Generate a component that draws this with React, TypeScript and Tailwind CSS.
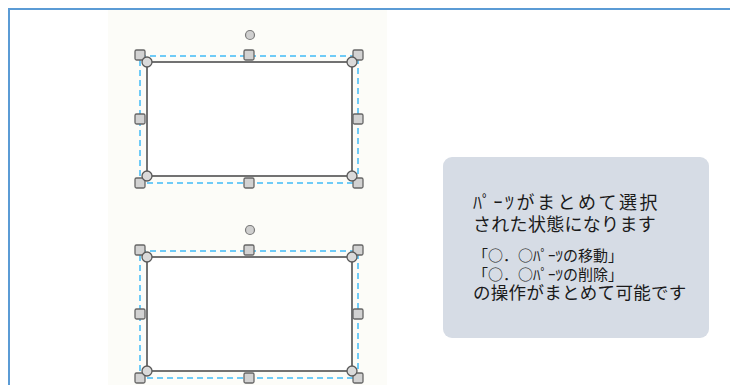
import type { ReactNode } from "react";

const jp = { fontFamily: '"Noto Sans CJK JP", "Noto Sans", sans-serif' };

// one selected shape: rotation knob, dashed selection frame, handles, rect
function SelectedShape() {
  const hx = [32, 141, 250];
  const hy = [45, 109, 173];
  const handles: [number, number][] = [
    [hx[0], hy[0]], [hx[1], hy[0]], [hx[2], hy[0]],
    [hx[0], hy[1]], [hx[2], hy[1]],
    [hx[0], hy[2]], [hx[1], hy[2]], [hx[2], hy[2]],
  ];
  const corners: [number, number][] = [[39, 52], [244, 52], [39, 166], [244, 166]];
  return (
    <svg width="279" height="195" viewBox="0 0 279 195" className="block shrink-0">
      <circle cx="142" cy="25" r="4.5" fill="#cfcfcf" stroke="#7a7a7a" strokeWidth="1.2" />
      <rect x="39" y="52" width="205" height="114" fill="#ffffff" stroke="#727272" strokeWidth="2" />
      <rect x="32" y="46" width="218" height="127" fill="none" stroke="#6fcbf7" strokeWidth="2" strokeDasharray="6 4" />
      {handles.map(([x, y], i) => (
        <rect key={i} x={x - 5} y={y - 5} width="10" height="10" rx="1.5" fill="#d2d2d2" stroke="#666666" strokeWidth="1.3" />
      ))}
      {corners.map(([x, y], i) => (
        <circle key={i} cx={x} cy={y} r="5" fill="#dadada" stroke="#5a5a5a" strokeWidth="1.3" />
      ))}
    </svg>
  );
}

function Line({ children, className }: { children: ReactNode; className: string }) {
  return <div className={"whitespace-nowrap text-[#1a1a1a] " + className}>{children}</div>;
}

export default function App() {
  return (
    <div className="w-[730px] h-[385px] overflow-hidden bg-white pl-2 pt-2">
      <div className="flex h-[400px] border-l-2 border-t-2 border-[#5b9bd5]">
        <div className="w-[98px] shrink-0" />
        <div className="w-[279px] shrink-0 bg-[#fcfcf8] flex flex-col overflow-hidden">
          <SelectedShape />
          <SelectedShape />
        </div>
        <div className="flex-1">
          <div
            className="ml-[56px] mt-[147px] w-[266px] h-[181px] rounded-[9px] bg-[#d6dce5] pl-[30px] pt-[33px]"
            style={jp}
          >
            <Line className="text-[18px] leading-[22px] tracking-[2.5px]">ﾊﾟｰﾂがまとめて選択</Line>
            <Line className="text-[18px] leading-[22px] tracking-[0.3px]">された状態になります</Line>
            <Line className="mt-[11px] text-[15px] leading-[19px]">「○．○ﾊﾟｰﾂの移動」</Line>
            <Line className="text-[15px] leading-[19px]">「○．○ﾊﾟｰﾂの削除」</Line>
            <Line className="text-[17.5px] leading-[18px] tracking-[0.3px]">の操作がまとめて可能です</Line>
          </div>
        </div>
      </div>
    </div>
  );
}
